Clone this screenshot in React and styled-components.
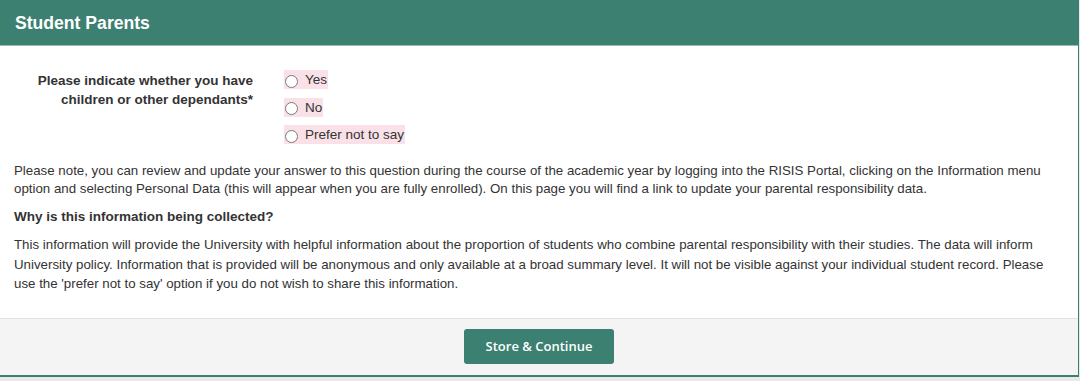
import React from "react";
import styled, { createGlobalStyle } from "styled-components";

const GlobalStyle = createGlobalStyle`
  body {
    margin: 0;
    background: #e9e9e9;
    font-family: "Liberation Sans", Arial, sans-serif;
    color: #333;
  }
`;

const Panel = styled.section`
  width: 1078px;
  border-right: 1px solid #3b8070;
  border-bottom: 2px solid #3b8070;
  background: #fff;
`;

const Header = styled.header`
  height: 46px;
  box-sizing: border-box;
  background: #3b8070;
  border-bottom: 1px solid #8fc2b7;
  display: flex;
  align-items: center;
  padding: 1px 0 0 15px;
`;

const Title = styled.h2`
  margin: 0;
  font-size: 17.6px;
  font-weight: bold;
  color: #fff;
`;

const Body = styled.div`
  padding: 24px 14px 15px;
`;

const Question = styled.div`
  display: grid;
  grid-template-columns: 239px 1fr;
  column-gap: 31px;
  margin-bottom: 18px;
`;

const Label = styled.div`
  text-align: right;
  font-size: 13.5px;
  font-weight: bold;
  line-height: 19px;
  padding-top: 1px;
`;

const Options = styled.div`
  display: flex;
  flex-direction: column;
  align-items: flex-start;
  gap: 8.5px;
`;

const Option = styled.label`
  display: flex;
  align-items: center;
  gap: 7px;
  height: 19px;
  background: #f9e1e7;
  font-size: 13.5px;
  padding-right: 1px;
  cursor: pointer;
`;

const Radio = styled.input.attrs({ type: "radio" })`
  appearance: none;
  margin: 3px 0 0 1px;
  width: 13px;
  height: 13px;
  border: 1px solid #7a7a7a;
  border-radius: 50%;
  background: #fff;
  box-sizing: border-box;
  &:checked {
    background: radial-gradient(circle, #3b8070 0 3px, #fff 3.5px);
  }
`;

const Para = styled.p`
  margin: 0 0 9px;
  font-size: 13.3px;
  line-height: ${(p) => p.$lh || 18}px;
`;

const SubHeading = styled.h3`
  margin: 0 0 9px;
  font-size: 13.5px;
  font-weight: bold;
  line-height: 19px;
`;

const Footer = styled.footer`
  height: 57px;
  box-sizing: border-box;
  background: #f4f4f4;
  border-top: 1px solid #e2e2e2;
  display: flex;
  justify-content: center;
  align-items: center;
  padding-bottom: 1px;
`;

const Button = styled.button`
  width: 150px;
  height: 35px;
  border: none;
  border-radius: 3px;
  background: #3b8070;
  color: #fff;
  font-family: "Open Sans", sans-serif;
  font-size: 13px;
  font-weight: 600;
  cursor: pointer;
`;

const options = ["Yes", "No", "Prefer not to say"];

export default function App() {
  return (
    <>
      <GlobalStyle />
      <Panel>
        <Header>
          <Title>Student Parents</Title>
        </Header>
        <Body>
          <Question>
            <Label>
              Please indicate whether you have
              <br />
              children or other dependants*
            </Label>
            <Options>
              {options.map((o) => (
                <Option key={o}>
                  <Radio name="dependants" value={o} />
                  {o}
                </Option>
              ))}
            </Options>
          </Question>
          <Para>
            Please note, you can review and update your answer to this question
            during the course of the academic year by logging into the RISIS
            Portal, clicking on the Information menu option and selecting
            Personal Data (this will appear when you are fully enrolled). On
            this page you will find a link to update your parental
            responsibility data.
          </Para>
          <SubHeading>Why is this information being collected?</SubHeading>
          <Para $lh={19.5}>
            This information will provide the University with helpful
            information about the proportion of students who combine parental
            responsibility with their studies. The data will inform University
            policy. Information that is provided will be anonymous and only
            available at a broad summary level. It will not be visible against
            your individual student record. Please use the 'prefer not to say'
            option if you do not wish to share this information.
          </Para>
        </Body>
        <Footer>
          <Button>Store &amp; Continue</Button>
        </Footer>
      </Panel>
    </>
  );
}
